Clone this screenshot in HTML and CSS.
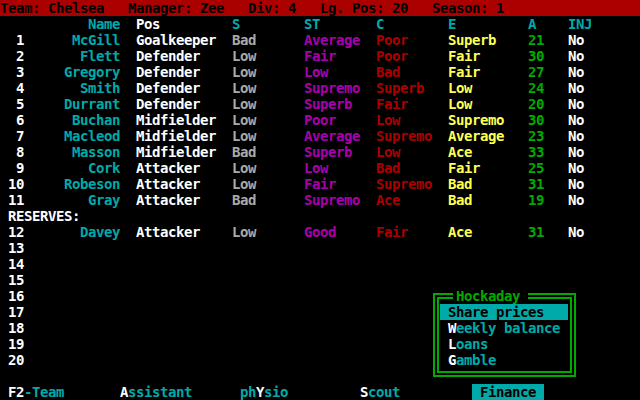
FILE: index.html
```html
<!DOCTYPE html>
<html>
<head>
<meta charset="utf-8">
<link rel="stylesheet" href="styles.css">
</head>
<body>
<div class="screen">
  <div class="topbar">
    <span>Team: Chelsea</span><span>Manager: Zee</span><span>Div: 4</span><span>Lg. Pos: 20</span><span>Season: 1</span>
  </div>
  <div class="row head">
    <span></span><span class="name">Name</span><span class="pos">Pos</span><span>S</span><span>ST</span><span>C</span><span>E</span><span>A</span><span>INJ</span>
  </div>
  <div class="row"><span class="num">1</span><span class="name">McGill</span><span class="pos">Goalkeeper</span><span class="s">Bad</span><span class="st">Average</span><span class="c">Poor</span><span class="e">Superb</span><span class="a">21</span><span class="inj">No</span></div>
  <div class="row"><span class="num">2</span><span class="name">Flett</span><span class="pos">Defender</span><span class="s">Low</span><span class="st">Fair</span><span class="c">Poor</span><span class="e">Fair</span><span class="a">30</span><span class="inj">No</span></div>
  <div class="row"><span class="num">3</span><span class="name">Gregory</span><span class="pos">Defender</span><span class="s">Low</span><span class="st">Low</span><span class="c">Bad</span><span class="e">Fair</span><span class="a">27</span><span class="inj">No</span></div>
  <div class="row"><span class="num">4</span><span class="name">Smith</span><span class="pos">Defender</span><span class="s">Low</span><span class="st">Supremo</span><span class="c">Superb</span><span class="e">Low</span><span class="a">24</span><span class="inj">No</span></div>
  <div class="row"><span class="num">5</span><span class="name">Durrant</span><span class="pos">Defender</span><span class="s">Low</span><span class="st">Superb</span><span class="c">Fair</span><span class="e">Low</span><span class="a">20</span><span class="inj">No</span></div>
  <div class="row"><span class="num">6</span><span class="name">Buchan</span><span class="pos">Midfielder</span><span class="s">Low</span><span class="st">Poor</span><span class="c">Low</span><span class="e">Supremo</span><span class="a">30</span><span class="inj">No</span></div>
  <div class="row"><span class="num">7</span><span class="name">Macleod</span><span class="pos">Midfielder</span><span class="s">Low</span><span class="st">Average</span><span class="c">Supremo</span><span class="e">Average</span><span class="a">23</span><span class="inj">No</span></div>
  <div class="row"><span class="num">8</span><span class="name">Masson</span><span class="pos">Midfielder</span><span class="s">Bad</span><span class="st">Superb</span><span class="c">Low</span><span class="e">Ace</span><span class="a">33</span><span class="inj">No</span></div>
  <div class="row"><span class="num">9</span><span class="name">Cork</span><span class="pos">Attacker</span><span class="s">Low</span><span class="st">Low</span><span class="c">Bad</span><span class="e">Fair</span><span class="a">25</span><span class="inj">No</span></div>
  <div class="row"><span class="num">10</span><span class="name">Robeson</span><span class="pos">Attacker</span><span class="s">Low</span><span class="st">Fair</span><span class="c">Supremo</span><span class="e">Bad</span><span class="a">31</span><span class="inj">No</span></div>
  <div class="row"><span class="num">11</span><span class="name">Gray</span><span class="pos">Attacker</span><span class="s">Bad</span><span class="st">Supremo</span><span class="c">Ace</span><span class="e">Bad</span><span class="a">19</span><span class="inj">No</span></div>
  <div class="line reserves">RESERVES:</div>
  <div class="row"><span class="num">12</span><span class="name">Davey</span><span class="pos">Attacker</span><span class="s">Low</span><span class="st">Good</span><span class="c">Fair</span><span class="e">Ace</span><span class="a">31</span><span class="inj">No</span></div>
  <div class="row"><span class="num">13</span></div>
  <div class="row"><span class="num">14</span></div>
  <div class="row"><span class="num">15</span></div>
  <div class="row"><span class="num">16</span></div>
  <div class="row"><span class="num">17</span></div>
  <div class="row"><span class="num">18</span></div>
  <div class="row"><span class="num">19</span></div>
  <div class="row"><span class="num">20</span></div>
  <div class="line"></div>
  <div class="bottombar">
    <span><b class="key">F2</b>-Team</span>
    <span><b class="key">A</b>ssistant</span>
    <span>ph<b class="key">Y</b>sio</span>
    <span><b class="key">S</b>cout</span>
    <span class="active">Finance</span>
  </div>

  <div class="popup">
    <div class="popup-title">Hockaday</div>
    <div class="item selected">Share prices</div>
    <div class="item"><b class="key">W</b>eekly balance</div>
    <div class="item"><b class="key">L</b>oans</div>
    <div class="item"><b class="key">G</b>amble</div>
  </div>
</div>
</body>
</html>
```
FILE: styles.css
```css
html, body {
  margin: 0;
  padding: 0;
  background: #000;
}
.screen {
  position: relative;
  width: 640px;
  height: 400px;
  overflow: hidden;
  background: #000;
  color: #fff;
  font-family: "DejaVu Sans Mono", "Liberation Mono", monospace;
  font-weight: bold;
  font-size: 14px;
  letter-spacing: -0.43px;
  line-height: 16px;
  white-space: nowrap;
}
.topbar {
  height: 16px;
  background: #aa0000;
  color: #000;
  display: flex;
  gap: 24px;
}
.row {
  height: 16px;
  display: grid;
  grid-template-columns: 24px 96px 112px 72px 72px 72px 80px 40px 72px;
}
.row .num { text-align: right; color: #fff; }
.row .name { text-align: right; color: #00aaaa; }
.row .pos { padding-left: 16px; color: #fff; }
.row .s { color: #aaaaaa; }
.row .st { color: #aa00aa; }
.row .c { color: #aa0000; }
.row .e { color: #ffff55; }
.row .a { color: #00aa00; }
.row .inj { color: #fff; }
.row.head { color: #00aaaa; }
.line {
  height: 16px;
}
.reserves {
  padding-left: 8px;
  color: #fff;
}
.bottombar {
  height: 16px;
  display: grid;
  grid-template-columns: 112px 120px 120px 112px 72px;
  padding-left: 8px;
  color: #00aaaa;
}
.key {
  color: #fff;
  font-weight: bold;
}
.bottombar .active {
  background: #00aaaa;
  color: #000;
  padding-left: 8px;
}
.popup {
  position: absolute;
  left: 433px;
  top: 293px;
  width: 131px;
  height: 67px;
  border: 6px double #00aa00;
  padding: 5px 0 0 0;
  background: #000;
  color: #00aaaa;
}
.popup-title {
  position: absolute;
  top: -11px;
  left: 14px;
  padding: 0 8px 0 3px;
  background: #000;
  color: #00aa00;
}
.item {
  height: 16px;
  padding-left: 9px;
}
.item.selected {
  background: #00aaaa;
  color: #000;
  margin: 0 2px 0 1px;
  padding-left: 8px;
}
```
